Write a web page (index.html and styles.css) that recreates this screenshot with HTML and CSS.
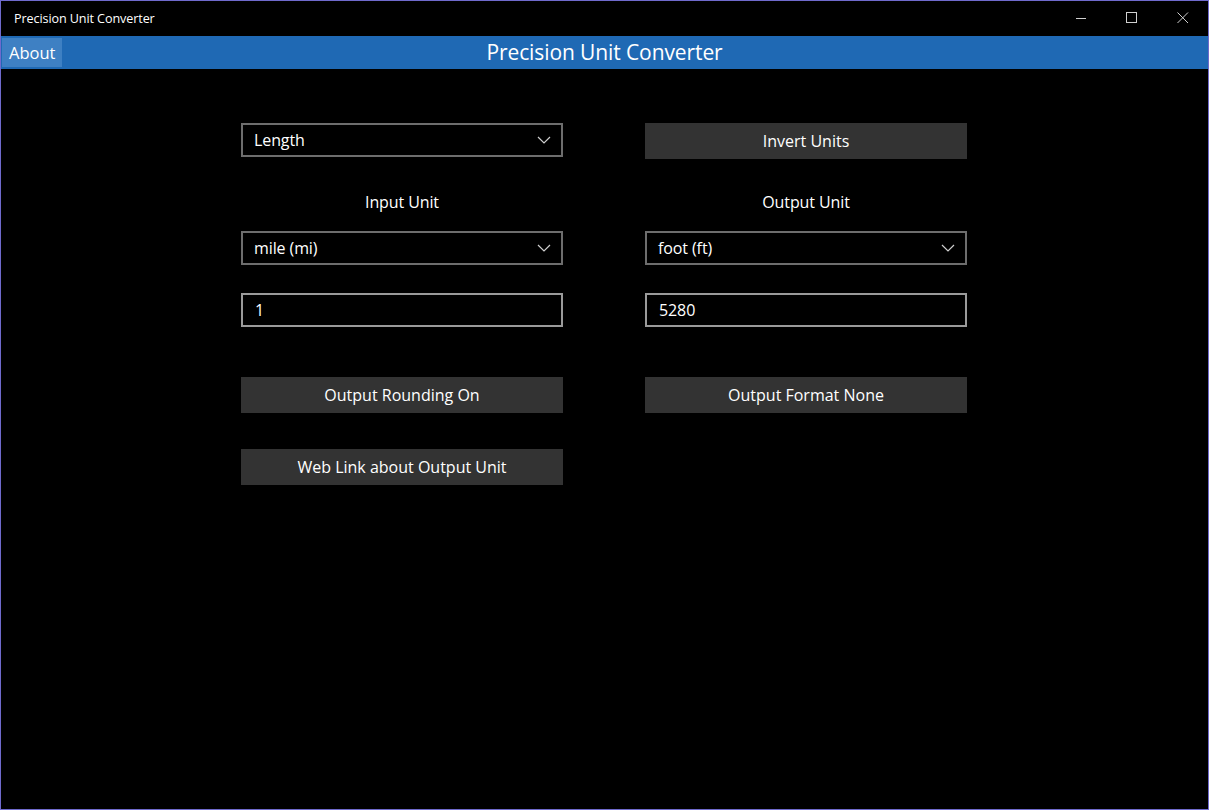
FILE: index.html
```html
<!DOCTYPE html>
<html>
<head>
<meta charset="utf-8">
<link rel="stylesheet" href="styles.css">
</head>
<body>
<div class="window">
  <div class="titlebar">
    <span class="wintitle">Precision Unit Converter</span>
    <div class="caption">
      <span class="cbtn"><svg width="12" height="12" viewBox="0 0 12 12"><path d="M1 6.5H11" stroke="#d0d0d0" stroke-width="1"/></svg></span>
      <span class="cbtn"><svg width="12" height="12" viewBox="0 0 12 12"><rect x="0.5" y="0.5" width="10" height="10" fill="none" stroke="#d0d0d0" stroke-width="1"/></svg></span>
      <span class="cbtn"><svg width="12" height="12" viewBox="0 0 12 12"><path d="M0.5 0.5L11 11M11 0.5L0.5 11" stroke="#d0d0d0" stroke-width="1"/></svg></span>
    </div>
  </div>
  <div class="appbar">
    <div class="appbar-left"><span class="about">About</span></div>
    <div class="apptitle">Precision Unit Converter</div>
    <div></div>
  </div>
  <div class="content">
    <div class="grid">
      <div class="combo r1"><span>Length</span><svg class="chev" width="14" height="8" viewBox="0 0 14 8"><path d="M1 1L7 7L13 1" fill="none" stroke="#cfcfcf" stroke-width="1.2"/></svg></div>
      <div class="btn r1b">Invert Units</div>
      <div class="label">Input Unit</div>
      <div class="label">Output Unit</div>
      <div class="combo r3"><span>mile (mi)</span><svg class="chev" width="14" height="8" viewBox="0 0 14 8"><path d="M1 1L7 7L13 1" fill="none" stroke="#cfcfcf" stroke-width="1.2"/></svg></div>
      <div class="combo r3"><span>foot (ft)</span><svg class="chev" width="14" height="8" viewBox="0 0 14 8"><path d="M1 1L7 7L13 1" fill="none" stroke="#cfcfcf" stroke-width="1.2"/></svg></div>
      <div class="textbox">1</div>
      <div class="textbox">5280</div>
      <div class="btn r5">Output Rounding On</div>
      <div class="btn r5">Output Format None</div>
      <div class="btn r6">Web Link about Output Unit</div>
    </div>
  </div>
</div>
</body>
</html>
```
FILE: styles.css
```css
html, body {
  margin: 0;
  padding: 0;
  background: #000;
}
body {
  font-family: "Open Sans", "Noto Sans", sans-serif;
  color: #fff;
}
.window {
  width: 1209px;
  height: 810px;
  box-sizing: border-box;
  border: 1px solid #6f6acc;
  background: #000;
  display: flex;
  flex-direction: column;
}
.titlebar {
  height: 35px;
  display: flex;
  align-items: center;
  justify-content: space-between;
  padding-left: 13px;
}
.wintitle {
  font-size: 12.6px;
  color: #fff;
  letter-spacing: -0.1px;
}
.caption {
  display: flex;
  height: 100%;
}
.cbtn {
  width: 51px;
  height: 100%;
  display: flex;
  align-items: center;
  justify-content: center;
  padding-bottom: 1px;
  box-sizing: border-box;
}
.appbar {
  height: 33px;
  background: #1f69b4;
  display: grid;
  grid-template-columns: 1fr auto 1fr;
  align-items: center;
}
.appbar-left {
  display: flex;
  align-items: center;
  padding-left: 1px;
}
.about {
  background: #3e80c3;
  height: 29px;
  padding: 0 7px 0 7px;
  display: flex;
  align-items: center;
  font-size: 16.5px;
  color: #fff;
}
.apptitle {
  font-size: 21px;
  color: #fff;
  letter-spacing: -0.1px;
  padding-bottom: 1px;
}
.content {
  flex: 1;
  padding-top: 54px;
  padding-left: 240px;
}
.grid {
  display: grid;
  grid-template-columns: 322px 322px;
  column-gap: 82px;
  align-items: start;
}
.combo, .textbox {
  box-sizing: border-box;
  height: 34px;
  border: 2px solid #6d6d6d;
  display: flex;
  align-items: center;
  justify-content: space-between;
  padding: 0 10px 1px 11px;
  font-size: 16px;
  letter-spacing: -0.1px;
}
.textbox {
  border-color: #9a9a9a;
  margin-top: 28px;
  padding-left: 12px;
}
.chev {
  margin-top: 1px;
}
.btn {
  box-sizing: border-box;
  height: 36px;
  background: #333333;
  display: flex;
  align-items: center;
  justify-content: center;
  font-size: 16px;
  letter-spacing: 0px;
  padding-bottom: 1px;
}
.label {
  margin-top: 33px;
  height: 20px;
  line-height: 20px;
  text-align: center;
  font-size: 16px;
  letter-spacing: -0.1px;
}
.r3 {
  margin-top: 19px;
}
.r5 {
  margin-top: 50px;
}
.r6 {
  margin-top: 36px;
}
```
